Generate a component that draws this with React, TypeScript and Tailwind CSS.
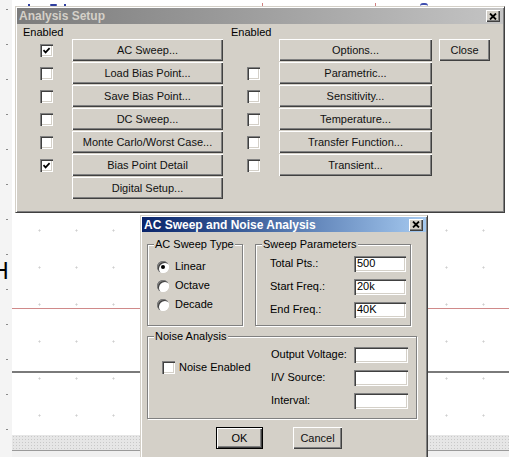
import React from 'react';

// classic 3D edges
const raised =
  'bg-[#d4d0c8] shadow-[inset_1px_1px_0_#ffffff,inset_-1px_-1px_0_#404040,inset_-2px_-2px_0_#808080]';
const sunken =
  'bg-white shadow-[inset_1px_1px_0_#808080,inset_2px_2px_0_#404040,inset_-1px_-1px_0_#ffffff,inset_-2px_-2px_0_#d4d0c8]';
const frame =
  'bg-[#d4d0c8] border border-t-[#d4d0c8] border-l-[#d4d0c8] border-b-[#404040] border-r-[#404040] shadow-[inset_1px_1px_0_#ffffff,inset_-1px_-1px_0_#808080] p-[1px]';
const etched =
  'border border-[#808080] shadow-[1px_1px_0_#ffffff,inset_1px_1px_0_#ffffff]';

const Check = ({ on }: { on?: boolean }) => (
  <span className={`w-[13px] h-[13px] flex items-center justify-center ${sunken}`}>
    {on && (
      <svg width="9" height="9" viewBox="0 0 9 9">
        <path d="M1.5 4.2 L3.6 6.4 L7.6 2.2" fill="none" stroke="#000" strokeWidth="1.7" />
      </svg>
    )}
  </span>
);

const Radio = ({ on }: { on?: boolean }) => (
  <span className="w-[12px] h-[12px] rounded-full bg-white shadow-[inset_1px_1px_0_#808080,inset_2px_2px_0_#404040,inset_-1px_-1px_0_#ffffff] flex items-center justify-center">
    {on && <span className="w-[4px] h-[4px] rounded-full bg-black" />}
  </span>
);

const Btn = ({ label, className = '' }: { label: string; className?: string }) => (
  <div className={`h-[22px] flex items-center justify-center text-[11px] text-[#111] ${raised} ${className}`}>
    {label}
  </div>
);

const CloseX = ({ className = '' }: { className?: string }) => (
  <div className={`w-[14px] h-[12px] flex items-center justify-center ${raised} ${className}`}>
    <svg width="8" height="7" viewBox="0 0 8 7">
      <path d="M1 0.5 L7 6.5 M7 0.5 L1 6.5" stroke="#000" strokeWidth="1.8" />
    </svg>
  </div>
);

const Field = ({ value = '', className = '' }: { value?: string; className?: string }) => (
  <div className={`h-[16px] pl-[3px] flex items-center text-[11px] leading-none ${sunken} ${className}`}>
    {value}
  </div>
);

type Row = { on1?: boolean; box1: boolean; b1: string; on2?: boolean; box2: boolean; b2: string; close?: boolean };

const ROWS: Row[] = [
  { on1: true, box1: true, b1: 'AC Sweep...', box2: false, b2: 'Options...', close: true },
  { box1: true, b1: 'Load Bias Point...', box2: true, b2: 'Parametric...' },
  { box1: true, b1: 'Save Bias Point...', box2: true, b2: 'Sensitivity...' },
  { box1: true, b1: 'DC Sweep...', box2: true, b2: 'Temperature...' },
  { box1: true, b1: 'Monte Carlo/Worst Case...', box2: true, b2: 'Transfer Function...' },
  { on1: true, box1: true, b1: 'Bias Point Detail', box2: true, b2: 'Transient...' },
  { box1: false, b1: 'Digital Setup...', box2: false, b2: '' },
];

const AnalysisSetup = () => (
  <div className={`absolute left-[15px] top-[6px] w-[490px] h-[207px] ${frame}`}>
    <div className="h-[16px] pl-[2px] flex items-center justify-between bg-gradient-to-r from-[#7c7c7c] to-[#c4c4c4]">
      <span className="text-[12px] font-bold text-[#d4d0c8]">Analysis Setup</span>
      <CloseX className="mr-[3px]" />
    </div>
    <div className="pt-[3px] grid grid-cols-[55px_151px_56px_153px_7px_51px] grid-rows-[11px_repeat(7,22px)] gap-y-[1px]">
      <div className="pl-[6px] leading-[11px]">Enabled</div>
      <div />
      <div className="pl-[8px] leading-[11px]">Enabled</div>
      <div />
      <div />
      <div />
      {ROWS.map((r) => (
        <React.Fragment key={r.b1}>
          <div className="flex items-center justify-center pl-[3px]">{r.box1 && <Check on={r.on1} />}</div>
          <Btn label={r.b1} />
          <div className="flex items-center justify-center pl-[4px]">{r.box2 && <Check on={r.on2} />}</div>
          {r.b2 ? <Btn label={r.b2} /> : <div />}
          <div />
          {r.close ? <Btn label="Close" /> : <div />}
        </React.Fragment>
      ))}
    </div>
  </div>
);

const AcSweep = () => (
  <div className={`absolute left-[140px] top-[215px] w-[288px] h-[250px] ${frame}`}>
    <div className="h-[15px] pl-[2px] flex items-center justify-between bg-gradient-to-r from-[#0a246a] to-[#a6caf0]">
      <span className="text-[12px] font-bold text-white">AC Sweep and Noise Analysis</span>
      <CloseX className="mr-[3px]" />
    </div>
    <div className="pl-[5px] pt-[6px]">
      <div className="flex gap-[12px]">
        <fieldset className={`w-[96px] h-[88px] ${etched}`}>
          <legend className="ml-[6px] px-[1px] leading-[13px] bg-[#d4d0c8]">AC Sweep Type</legend>
          <div className="pt-[6px] pl-[9px] flex flex-col">
            {[
              ['Linear', true],
              ['Octave', false],
              ['Decade', false],
            ].map(([t, on]) => (
              <div key={t as string} className="h-[19px] flex items-center gap-[6px]">
                <Radio on={on as boolean} />
                <span>{t}</span>
              </div>
            ))}
          </div>
        </fieldset>
        <fieldset className={`w-[156px] h-[88px] ${etched}`}>
          <legend className="ml-[6px] px-[1px] leading-[13px] bg-[#d4d0c8]">Sweep Parameters</legend>
          <div className="pt-[1px] pl-[14px] flex flex-col">
            {[
              ['Total Pts.:', '500'],
              ['Start Freq.:', '20k'],
              ['End Freq.:', '40K'],
            ].map(([t, v]) => (
              <div key={t} className="h-[23px] flex items-center">
                <span className="w-[84px]">{t}</span>
                <Field value={v} className="w-[52px]" />
              </div>
            ))}
          </div>
        </fieldset>
      </div>
      <fieldset className={`mt-[4px] w-[270px] h-[89px] ${etched}`}>
        <legend className="ml-[6px] px-[1px] leading-[13px] bg-[#d4d0c8]">Noise Analysis</legend>
        <div className="flex">
          <div className="w-[123px] pl-[14px] pt-[18px] flex items-start gap-[4px]">
            <Check />
            <span className="leading-[13px]">Noise Enabled</span>
          </div>
          <div className="flex flex-col">
            {['Output Voltage:', 'I/V Source:', 'Interval:'].map((t) => (
              <div key={t} className="h-[23px] flex items-center">
                <span className="w-[83px]">{t}</span>
                <Field className="w-[54px]" />
              </div>
            ))}
          </div>
        </div>
      </fieldset>
      <div className="mt-[8px] pl-[69px] flex gap-[30px]">
        <div className="w-[47px] h-[22px] border border-black flex items-center justify-center bg-[#d4d0c8] shadow-[inset_1px_1px_0_#ffffff,inset_-1px_-1px_0_#404040,inset_-2px_-2px_0_#808080]">
          OK
        </div>
        <Btn label="Cancel" className="w-[49px]" />
      </div>
    </div>
  </div>
);

export default function App() {
  return (
    <div className="relative w-[509px] h-[457px] overflow-hidden bg-white font-['Liberation_Sans',Arial,sans-serif] text-[11px] text-black">
      {/* schematic page with its snap grid */}
      <div className="absolute left-[12px] top-0 right-0 bottom-0 bg-white bg-[radial-gradient(circle,#cfcfcf_0.8px,transparent_1.3px)] bg-[length:37px_37px] bg-[position:9px_-10px]" />
      {/* ruler strip on the left */}
      <div className="absolute left-0 top-0 w-[12px] h-full bg-[#f4f4f4] bg-[radial-gradient(circle,#8a8a8a_0.6px,transparent_1px)] bg-[length:14px_35px] bg-[position:0px_-8px]" />
      <div className="absolute left-[-8px] top-[260px] text-[23px] leading-none">H</div>

      {/* wires */}
      <div className="absolute left-[12px] right-0 top-[308px] h-px bg-[#d08a8a]" />
      <div className="absolute left-[12px] right-0 top-[371px] h-[2px] bg-[#7a7a7a]" />

      {/* marks along the top edge */}
      <span className="absolute left-[28px] top-[4px] w-[2px] h-[2px] bg-[#3040a0]" />
      <span className="absolute left-[50px] top-[4px] w-[7px] h-[2px] rounded-full bg-[#3040a0]" />
      <span className="absolute left-[64px] top-[4px] w-[2px] h-[2px] bg-[#3040a0]" />
      <span className="absolute left-[262px] top-[3px] w-px h-[4px] bg-[#d08080]" />
      <span className="absolute left-[375px] top-[3px] w-px h-[4px] bg-[#d08080]" />
      <span className="absolute left-[420px] top-[3px] w-[8px] h-[3px] rounded-t-full border-t-2 border-[#4050b0]" />

      {/* bottom scroll area */}
      <div className="absolute left-[12px] right-0 top-[435px] h-[15px] bg-[#e6e6e6] bg-[radial-gradient(circle,#c8c8c8_0.6px,transparent_1px)] bg-[length:3px_3px]" />
      <div className="absolute left-[12px] right-0 top-[450px] h-px bg-[#9a9a9a]" />
      <div className="absolute left-[12px] right-0 top-[451px] bottom-0 bg-[#f0f0f0]" />

      <AnalysisSetup />
      <AcSweep />
    </div>
  );
}
